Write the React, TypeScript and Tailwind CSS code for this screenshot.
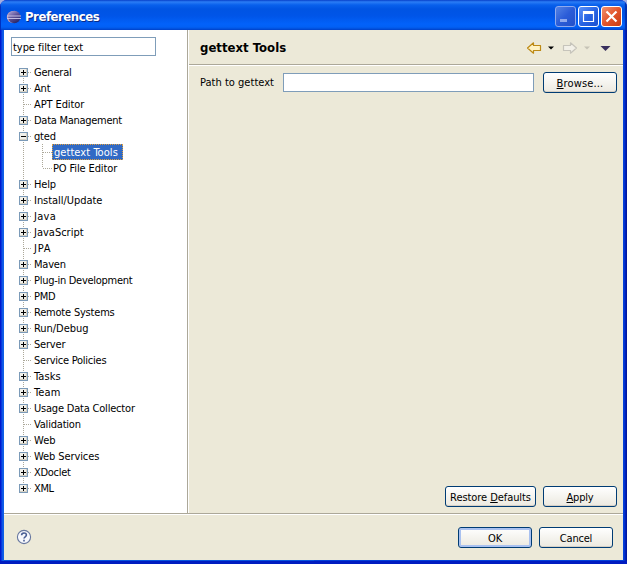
import React from "react";

type Node = { label: string; leaf?: boolean; open?: boolean; child?: boolean; selected?: boolean; last?: boolean; tracking?: string };

const nodes: Node[] = [
  { label: "General" },
  { label: "Ant" },
  { label: "APT Editor", leaf: true, tracking: "tracking-[-0.1px]" },
  { label: "Data Management", tracking: "tracking-[-0.27px]" },
  { label: "gted", open: true },
  { label: "gettext Tools", child: true, selected: true, tracking: "tracking-[0.06px]" },
  { label: "PO File Editor", child: true, last: true, tracking: "tracking-[-0.12px]" },
  { label: "Help" },
  { label: "Install/Update", tracking: "tracking-[-0.04px]" },
  { label: "Java", tracking: "tracking-[0.3px]" },
  { label: "JavaScript", tracking: "tracking-[0px]" },
  { label: "JPA", leaf: true, tracking: "tracking-[0.8px]" },
  { label: "Maven" },
  { label: "Plug-in Development", tracking: "tracking-[-0.28px]" },
  { label: "PMD" },
  { label: "Remote Systems" },
  { label: "Run/Debug", tracking: "tracking-[-0.05px]" },
  { label: "Server" },
  { label: "Service Policies", leaf: true, tracking: "tracking-[-0.25px]" },
  { label: "Tasks", tracking: "tracking-[0.1px]" },
  { label: "Team", tracking: "tracking-[0.1px]" },
  { label: "Usage Data Collector" },
  { label: "Validation", leaf: true },
  { label: "Web", tracking: "tracking-[0px]" },
  { label: "Web Services", tracking: "tracking-[-0.1px]" },
  { label: "XDoclet", tracking: "tracking-[-0.3px]" },
  { label: "XML", tracking: "tracking-[-0.4px]" },
];

function Guide({ node, first, end }: { node: Node; first: boolean; end: boolean }) {
  const expandable = !node.leaf && !node.child;
  const stroke = { stroke: "#aca899", strokeDasharray: "1 1" };
  return (
    <svg width={node.child ? 36 : 16} height="16" className="shrink-0" shapeRendering="crispEdges">
      <path d={first ? "M4.5 8V16" : end ? "M4.5 0V8" : "M4.5 0V16"} {...stroke} />
      {node.child ? (
        <path d={node.last ? "M23.5 0V8M24 8.5H33" : "M23.5 0V16M24 8.5H33"} {...stroke} />
      ) : (
        <path d="M5 8.5H13" {...stroke} />
      )}
      {expandable && (
        <>
          <rect x="0.5" y="4.5" width="8" height="8" fill="#f1f0ea" stroke="#7b9ab8" />
          <path d="M7.5 5V12M1 11.5H8" stroke="#d5d0c3" />
          <path d={node.open ? "M2 8.5H7" : "M2 8.5H7M4.5 6V11"} stroke="#000" />
        </>
      )}
    </svg>
  );
}

function TreeRow({ node, first, end }: { node: Node; first: boolean; end: boolean }) {
  const tracking = node.tracking ?? "tracking-[-0.2px]";
  return (
    <div className="flex h-4 items-center">
      <Guide node={node} first={first} end={end} />
      {node.selected ? (
        <span className={`${tracking} -ml-[3px] h-4 w-[71px] border border-dotted border-[#e0a040] bg-[#316ac5] pt-px pl-px leading-[14px] whitespace-nowrap text-white`}>
          {node.label}
        </span>
      ) : (
        <span className={`${tracking} ${node.child ? "-ml-[2px]" : "-ml-px"} pt-px leading-4`}>{node.label}</span>
      )}
    </div>
  );
}

function Button({ children, className = "w-[74px]", focus }: { children: React.ReactNode; className?: string; focus?: boolean }) {
  return (
    <button
      className={`${className} h-[21px] rounded-[3px] border border-[#003c74] bg-linear-to-b from-white via-[#f5f4ef] to-[#ece9e0] pt-[2px] text-center leading-[17px] whitespace-nowrap ${
        focus ? "shadow-[inset_0_0_0_2px_#a9c1f0]" : "shadow-[inset_0_-1px_0_#d6d0c5]"
      }`}
    >
      {children}
    </button>
  );
}

function CaptionButton({ kind }: { kind: "min" | "max" | "close" }) {
  const tone =
    kind === "close"
      ? "border-white bg-linear-to-br from-[#f0906c] via-[#e2552c] to-[#c83c12]"
      : kind === "max"
        ? "border-white bg-linear-to-br from-[#5c92f8] via-[#2864e4] to-[#1c50d0]"
        : "border-[#8ea9ee] bg-linear-to-br from-[#5482e4] via-[#2b5cd8] to-[#2350c8]";
  return (
    <div className={`size-[21px] rounded-[3px] border ${tone}`}>
      <svg width="19" height="19" viewBox="0 0 19 19" fill="none">
        {kind === "min" && <path d="M4 13.5H11" stroke="#8fa9ed" strokeWidth="3" />}
        {kind === "max" && <path d="M4.5 4V14.5H14.5V4" stroke="#fff" strokeWidth="1.2" />}
        {kind === "max" && <path d="M4 5.5H15" stroke="#fff" strokeWidth="3" />}
        {kind === "close" && <path d="M4.5 4.5L14.5 14.5M14.5 4.5L4.5 14.5" stroke="#fff" strokeWidth="2.2" />}
      </svg>
    </div>
  );
}

function EclipseIcon() {
  return (
    <svg width="16" height="16" viewBox="0 0 16 16">
      <defs>
        <linearGradient id="orb" x1="0" y1="0" x2="0.6" y2="1">
          <stop offset="0" stopColor="#b9b0dc" />
          <stop offset="0.5" stopColor="#62569c" />
          <stop offset="1" stopColor="#2c2868" />
        </linearGradient>
      </defs>
      <ellipse cx="7" cy="8" rx="6.2" ry="6" fill="#c4a0b8" />
      <circle cx="8.3" cy="8" r="6.2" fill="url(#orb)" />
      <path d="M1 7H15M1 9.5H15" stroke="#cfcaea" strokeWidth="0.9" />
    </svg>
  );
}

function Toolbar() {
  return (
    <svg width="90" height="16" viewBox="0 0 90 16">
      <path d="M2.5 8L8.5 2.8V5.5H15.5V10.5H8.5V13.2Z" fill="#fff3c4" stroke="#bd8a16" strokeWidth="1.2" strokeLinejoin="round" />
      <path d="M23 6.5H29L26 9.5Z" fill="#000" />
      <path d="M51.5 8L45.5 2.8V5.5H38.5V10.5H45.5V13.2Z" fill="#f2f0e8" stroke="#c6c4bb" strokeWidth="1.2" strokeLinejoin="round" />
      <path d="M59 6.5H65L62 9.5Z" fill="#c6c3b6" />
      <path d="M75.5 6H85.5L80.5 11Z" fill="#39305e" />
    </svg>
  );
}

export default function App() {
  return (
    <div className="h-[564px] w-[627px] bg-[#a3aee0] font-['DejaVu_Sans_Condensed','DejaVu_Sans',sans-serif] text-[11px] tracking-[-0.2px] text-black [font-stretch:condensed]">
      <div className="flex h-full flex-col overflow-hidden rounded-t-[7px] bg-[#0019cf]">
        <header className="flex h-[30px] shrink-0 items-center bg-[linear-gradient(to_bottom,#0a47d0_0,#2a7cf5_2px,#0860ec_5px,#0054e3_9px,#0055e8_16px,#0262fa_24px,#0260f5_27px,#0046cd_30px)] pt-[3px] pr-[5px] pl-[6px] shadow-[inset_-2px_0_1px_#0030b0,inset_1px_0_0_#0030c0]">
          <EclipseIcon />
          <h1 className="ml-[3px] grow pt-px text-[13px] leading-4 font-bold tracking-[-0.45px] text-white [text-shadow:1px_1px_0_#0a2a85]">Preferences</h1>
          <div className="flex gap-[2px]">
            <CaptionButton kind="min" />
            <CaptionButton kind="max" />
            <CaptionButton kind="close" />
          </div>
        </header>
        <div className="flex grow bg-[linear-gradient(to_right,#0019cf_0,#0019cf_1px,#0831d9_1px,#0841e0_2px,#166aee_3px,#0855dd_4px,#0855dd_50%,#0441d8_50%,#0441d8_624px,#0025c8_625px,#001590_627px)] px-1 pb-1 shadow-[inset_0_-3px_0_#001cc0]">
          <div className="flex w-full flex-col bg-[#ece9d8]">
            <div className="flex h-[483px] shrink-0">
              <aside className="w-[184px] shrink-0 border-r border-[#aca899] bg-white pt-[7px] pl-[7px]">
                <div className="h-[19px] w-[145px] border border-[#7f9db9] bg-white pt-px pl-px leading-[17px] tracking-[-0.05px]">type filter text</div>
                <div className="mt-2 ml-2">
                  {nodes.map((n, i) => (
                    <TreeRow key={n.label} node={n} first={i === 0} end={i === nodes.length - 1} />
                  ))}
                </div>
              </aside>
              <main className="flex grow flex-col border-l border-white">
                <div className="flex h-[35px] items-center justify-between border-b border-[#aca899] pr-2 pl-[11px]">
                  <h2 className="pt-[2px] text-[13px] font-bold tracking-[0.02px]">gettext Tools</h2>
                  <div className="pt-px"><Toolbar /></div>
                </div>
                <div className="flex items-center border-t border-white pt-[6px] pr-[6px] pl-[11px]">
                  <label className="w-[83px] pt-[2px] tracking-[0.02px]">Path to gettext</label>
                  <input className="h-[19px] w-[251px] border border-[#7f9db9] bg-white" />
                  <Button className="ml-[9px] w-[74px] tracking-[0.15px]"><u>B</u>rowse...</Button>
                </div>
                <div className="mt-auto flex justify-end gap-[7px] pr-[6px] pb-[6px]">
                  <Button className="w-[91px] tracking-[-0.07px]">Restore <u>D</u>efaults</Button>
                  <Button><u>A</u>pply</Button>
                </div>
              </main>
            </div>
            <footer className="flex grow items-center border-t border-[#aca899] pr-[10px] pl-3 shadow-[inset_0_1px_0_#fff]">
              <svg width="16" height="16" viewBox="0 0 16 16" fill="none">
                <circle cx="8" cy="8" r="6.6" fill="#f7f8fc" stroke="#67779f" strokeWidth="1.1" />
                <path d="M5.6 6.3C5.6 3.2 10.4 3.2 10.4 6C10.4 7.8 8 7.8 8 9.6M8 10.8V12.4" stroke="#4a5f94" strokeWidth="1.6" />
              </svg>
              <div className="ml-auto flex gap-[7px]">
                <Button focus>OK</Button>
                <Button>Cancel</Button>
              </div>
            </footer>
          </div>
        </div>
      </div>
    </div>
  );
}
